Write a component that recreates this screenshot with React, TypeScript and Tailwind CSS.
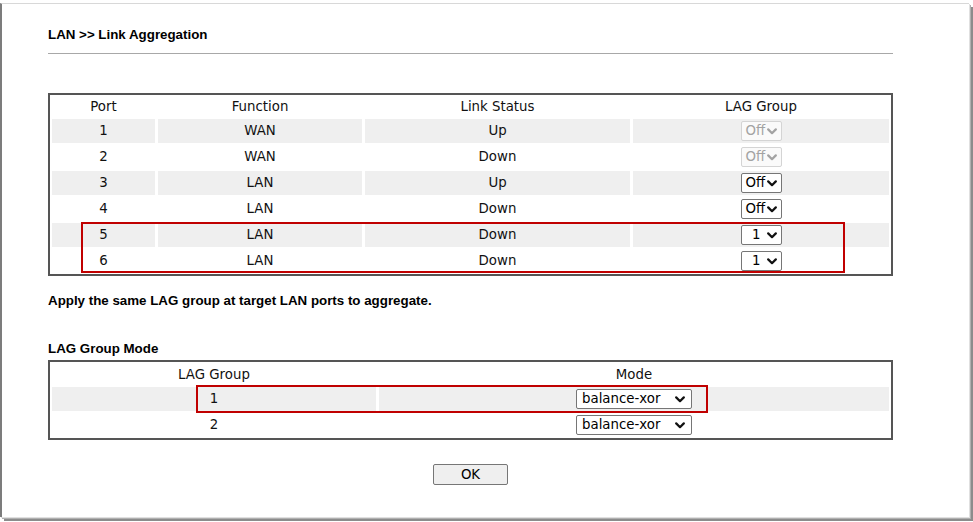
type PortRow = {
  port: number;
  fn: string;
  status: string;
  lag: string;
  disabled?: boolean;
};

const ports: PortRow[] = [
  { port: 1, fn: "WAN", status: "Up", lag: "Off", disabled: true },
  { port: 2, fn: "WAN", status: "Down", lag: "Off", disabled: true },
  { port: 3, fn: "LAN", status: "Up", lag: "Off" },
  { port: 4, fn: "LAN", status: "Down", lag: "Off" },
  { port: 5, fn: "LAN", status: "Down", lag: "1" },
  { port: 6, fn: "LAN", status: "Down", lag: "1" },
];

function Chevron({ color }: { color: string }) {
  return (
    <svg width="10" height="7" viewBox="0 0 10 7" className="shrink-0">
      <path d="M1.2 1.4 L5 5.2 L8.8 1.4" fill="none" stroke={color} strokeWidth="2.2" strokeLinecap="round" strokeLinejoin="round" />
    </svg>
  );
}

function FakeSelect({ value, width, disabled, alignRight }: { value: string; width: string; disabled?: boolean; alignRight?: boolean }) {
  return (
    <div
      className={`flex h-[20px] items-center rounded-[2px] border pl-[4px] pr-[4px] text-[13.33px] leading-none ${width} ${
        disabled ? "border-[#d4d4d4] bg-[#fafafa] text-[#a3a3a3]" : "border-[#767676] bg-white text-black"
      }`}
    >
      <span className={`flex-1 ${alignRight ? "pr-[6px] text-right" : "text-left"}`}>{value}</span>
      <Chevron color={disabled ? "#a3a3a3" : "#111"} />
    </div>
  );
}

function Cell({ children, gray }: { children: React.ReactNode; gray?: boolean }) {
  return <div className={`flex h-[24px] items-center justify-center ${gray ? "bg-[#efefef]" : ""}`}>{children}</div>;
}

export default function App() {
  return (
    <div className="relative h-[522px] w-[973px] overflow-hidden bg-white">
      <div className="mt-[3px] h-[514px] w-[969px] border-l-2 border-t border-l-[#7c7c7c] border-t-[#d8d8d8] shadow-[1px_1px_0_#e0e0e0,2px_2px_0_#b0b0b0,4px_4px_0_#8c8c8c]">
        <div className="w-[891px] pl-[46px] pt-[23px] font-['Liberation_Sans',Arial,sans-serif] text-black">
          <div className="h-[16px] text-[13.33px] font-bold leading-[16px]">LAN &gt;&gt; Link Aggregation</div>
          <div className="mt-[10px] border-t border-[#a8a8a8]" />

          <div className="relative mt-[39px] border-2 border-[#555] px-[2px] pb-[1px] pt-[2px] font-['DejaVu_Sans',Verdana,sans-serif] text-[13.33px] text-[#111]">
            <div className="grid grid-cols-[103px_204px_265px_256px] gap-x-[3px] gap-y-[2px]">
              {["Port", "Function", "Link Status", "LAG Group"].map((h) => (
                <div key={h} className="flex h-[20px] items-center justify-center">
                  {h}
                </div>
              ))}
              {ports.map((r) => {
                const gray = r.port % 2 === 1;
                return [
                  <Cell key={`${r.port}-p`} gray={gray}>{r.port}</Cell>,
                  <Cell key={`${r.port}-f`} gray={gray}>{r.fn}</Cell>,
                  <Cell key={`${r.port}-s`} gray={gray}>{r.status}</Cell>,
                  <Cell key={`${r.port}-l`} gray={gray}>
                    <FakeSelect value={r.lag} width="w-[41px]" disabled={r.disabled} alignRight={r.lag === "1"} />
                  </Cell>,
                ];
              })}
            </div>
            <div className="absolute left-[31px] top-[127px] h-[51px] w-[764px] border-2 border-[#c00000]" />
          </div>

          <div className="mt-[17px] h-[16px] text-[13.33px] font-bold leading-[16px]">Apply the same LAG group at target LAN ports to aggregate.</div>
          <div className="mt-[32px] h-[16px] text-[13.33px] font-bold leading-[16px]">LAG Group Mode</div>

          <div className="relative mt-[3px] border-2 border-[#555] px-[2px] pb-[1px] pt-[2px] font-['DejaVu_Sans',Verdana,sans-serif] text-[13.33px] text-[#111]">
            <div className="grid grid-cols-[324px_510px] gap-x-[3px] gap-y-[2px]">
              <div className="flex h-[21px] items-center justify-center">LAG Group</div>
              <div className="flex h-[21px] items-center justify-center">Mode</div>
              <Cell gray>1</Cell>
              <Cell gray>
                <FakeSelect value="balance-xor" width="w-[116px] pl-[5px] pr-[6px]" />
              </Cell>
              <Cell>2</Cell>
              <Cell>
                <FakeSelect value="balance-xor" width="w-[116px] pl-[5px] pr-[6px]" />
              </Cell>
            </div>
            <div className="absolute left-[146px] top-[23px] h-[28px] w-[512px] border-2 border-[#c00000]" />
          </div>

          <div className="mt-[24px] flex justify-center">
            <button className="h-[21px] w-[75px] rounded-[2px] border border-[#767676] bg-[#efefef] font-['DejaVu_Sans',Verdana,sans-serif] text-[13.33px] leading-none text-black">
              OK
            </button>
          </div>
        </div>
      </div>
    </div>
  );
}
